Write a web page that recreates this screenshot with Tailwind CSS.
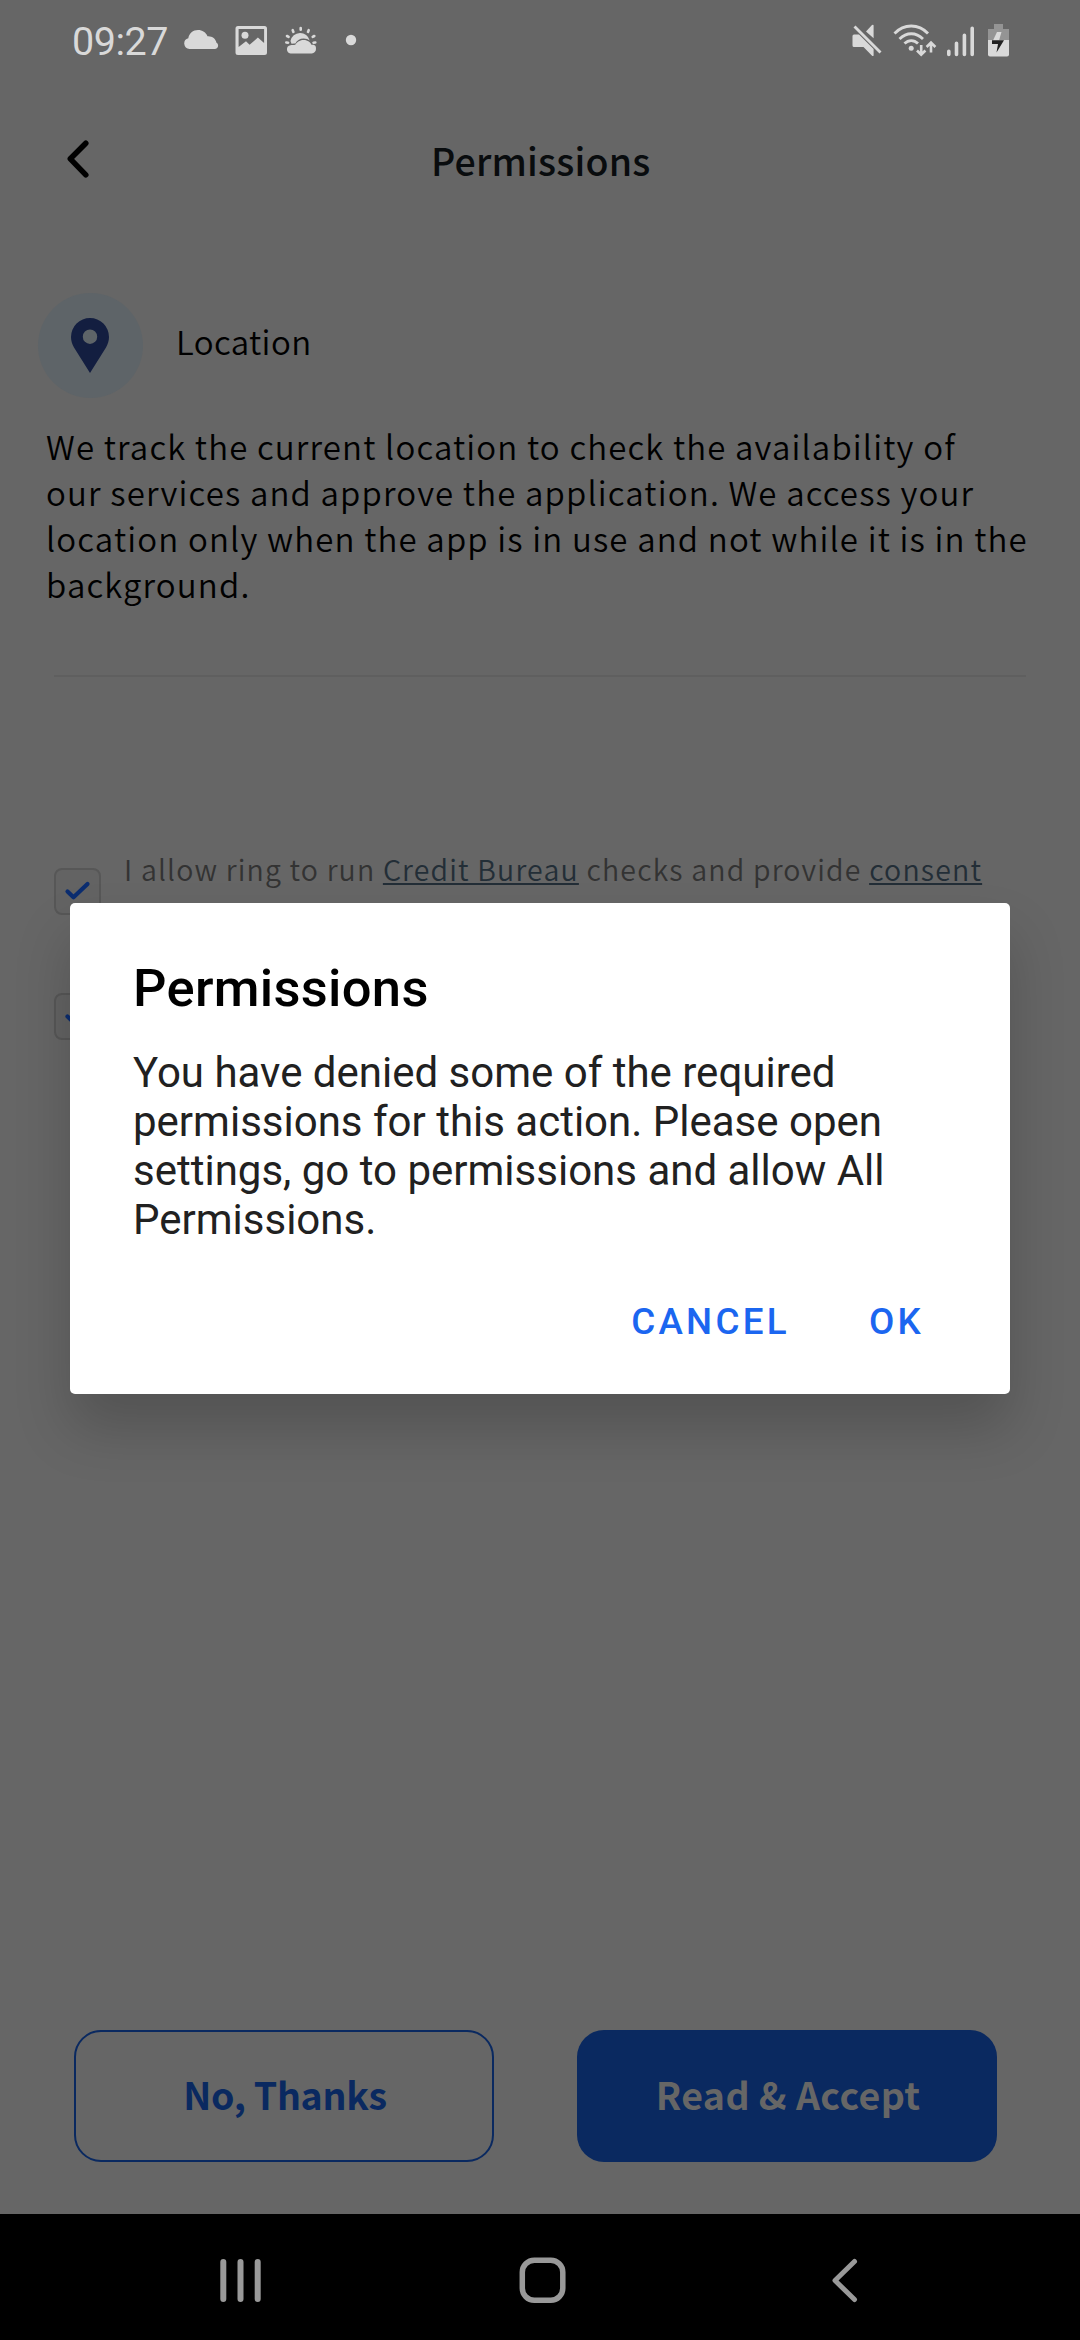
<!DOCTYPE html>
<html lang="en">
<head>
<meta charset="utf-8">
<title>Permissions</title>
<script src="https://cdn.jsdelivr.net/npm/@tailwindcss/browser@4"></script>
</head>
<body class="bg-[#666666]">
<div class="relative flex h-[2340px] w-[1080px] flex-col overflow-hidden bg-[#666666] font-['Noto_Sans_CJK_SC',sans-serif] text-black">

  <!-- status bar -->
  <div class="flex h-20 shrink-0 items-start justify-between pl-[72px] pr-[70px] text-[#d9d9d9]">
    <div class="flex">
      <span class="w-[112px] pt-[18px] font-[Roboto,sans-serif] text-[39.5px] leading-[48px] tracking-[-0.500px] whitespace-nowrap">09:27</span>
      <svg class="h-20 w-[176px]" viewBox="184 0 176 80" fill="currentColor">
        <path d="M189.500 49a5.500 5.500 0 0 1-1.200-10.800C189 33.500 193 30 198 30c4.300 0 8 2.500 9.500 6.200 4.500-.4 8.300 2.500 9 6.500 1 .5 1.600 1.500 1.600 2.800 0 2-1.500 3.500-3.400 3.500z"/>
        <path fill-rule="evenodd" d="M238 26h26.500a2.500 2.500 0 0 1 2.500 2.500v24a2.500 2.500 0 0 1-2.500 2.500H238a2.500 2.500 0 0 1-2.500-2.500v-24A2.500 2.500 0 0 1 238 26zm.6 3.100V47l7.400-5.800 3.600 3.600 8.300-7.300 6.200 5.500V29.100z"/>
        <circle cx="245" cy="35.300" r="3.500"/>
        <path d="M290.500 41a9.800 9.800 0 0 1 19.200-.5c-1.500-1.300-3.600-2.100-6-2.100-4 0-7 2-8.300 5.100a10 10 0 0 0-3.900.3z"/>
        <path d="M290.500 53.500a4.200 4.200 0 0 1 0-8.300c1.500-.4 4 .2 5-.7 1-2 4-4.600 8-4.600 4.500 0 7 2.600 8 4.800 4.500-.4 4.500 2 4.500 4.400 0 2.400-1.800 4.400-4.200 4.400z"/>
        <g stroke="currentColor" stroke-width="2.600" stroke-linecap="round"><path d="M300.700 28v1.800M292.700 30.200l.7 1.700M308.700 30.200l-.7 1.700M287 36l1.600.9M314.300 36l-1.600.9M286.300 42.500l1.800.2M315.300 42.500l-1.800.2"/></g>
        <circle cx="351" cy="40" r="5.200"/>
      </svg>
    </div>
    <svg class="h-20 w-[160px]" viewBox="850 0 160 80" fill="currentColor">
      <path d="M854 34.500h5l14.600 14.600v6.400q-.5 1-1.800 0l-8.300-8.500h-9.500a1.500 1.500 0 0 1-1.500-1.500v-9.500a1.500 1.500 0 0 1 1.500-1.500zM866 31.500l6-6.500q1.600-.8 1.600.6v12.600z"/>
      <path d="M854.500 26.500l26 26" stroke="currentColor" stroke-width="2.900"/>
      <g fill="none" stroke="currentColor" stroke-width="2.800"><path d="M894.500 33.500c9.500-10 24-10 33.500 0M899.500 39c7-7 16.500-7 23.500 0M904.500 43.600c4-4 9.500-4 13.500 0"/></g>
      <circle cx="911.200" cy="48.200" r="2.500"/>
      <g fill="none" stroke="currentColor" stroke-width="2.600"><path d="M921.200 45v9.500M917 50.500l4.200 4.200 4.200-4.200M931 52.500v-9.500M926.600 47l4.400-4.400 4.400 4.400"/></g>
      <g stroke="currentColor" stroke-width="3.600" stroke-linecap="round"><path d="M948.800 51.200v3.200M956.500 43.200v11.200M964.400 35.200v19.200M972.200 28.200v26.200"/></g>
      <path d="M994 24h9v5h6v11.500h-21V29h6z" fill="#949494"/>
      <path d="M988 40h21v14.500a2 2 0 0 1-2 2h-17a2 2 0 0 1-2-2z"/>
      <path d="M997 32h4.500l-2.500 8.500h-6z"/>
      <path d="M992 40.300h12l-7.500 12.200 1.500-8.500h-6z" fill="#222"/>
    </svg>
  </div>

  <!-- header -->
  <div class="flex h-[160px] shrink-0 pl-[64px]">
    <svg class="h-[160px] w-[28px]" viewBox="64 80 28 160" fill="none" stroke="#000" stroke-width="5.500" stroke-linecap="round" stroke-linejoin="round"><path d="M85.800 143.200 70.300 158.800 85.800 174.800"/></svg>
    <h1 class="ml-[339px] pt-[50px] text-[37.500px] leading-[60px] font-medium tracking-[0.200px] whitespace-nowrap text-[#090c0e]">Permissions</h1>
  </div>

  <!-- permission details -->
  <section class="flex flex-col pt-[53px]">
    <div class="flex items-center pl-[38px]">
      <div class="flex size-[105px] items-start justify-center rounded-full bg-[#5e6468]">
        <svg class="mt-[25px] -ml-px h-[55px] w-[38px]" viewBox="0 0 38 55" fill="#131e40"><path fill-rule="evenodd" d="M19 0a19 19 0 0 1 19 19c0 4-1.200 7-3 10.500L19 55 3 29.500C1.200 26 0 23 0 19A19 19 0 0 1 19 0zm0 11.500a7.200 7.200 0 1 0 0 14.400 7.200 7.200 0 0 0 0-14.400z"/></svg>
      </div>
      <span class="mb-[9px] ml-[33px] text-[33px] leading-[50px] font-[350] tracking-[0.400px]">Location</span>
    </div>
    <p class="mt-[25px] pl-[46px] text-[33px] leading-[46px] font-[350] tracking-[1.150px] whitespace-nowrap">We track the current location to check the availability of<br>our services and approve the application. We access your<br>location only when the app is in use and not while it is in the<br>background.</p>
    <div class="mt-[68px] ml-[54px] h-0.5 w-[972px] bg-[#5f5f5f]"></div>
  </section>

  <!-- consents -->
  <section class="flex flex-col gap-[78px] pt-[191px] pl-[54px]">
    <div class="flex h-[47px]">
      <div class="flex size-[47px] shrink-0 rounded-[8px] border-2 border-[#575757] bg-[#636363]">
        <svg class="size-[43px]" viewBox="0 0 43 43" fill="none" stroke="#0b2d70" stroke-width="4.200" stroke-linecap="round" stroke-linejoin="round"><path d="M11.500 21.500 17.500 27.300 31.500 14"/></svg>
      </div>
      <p class="-mt-[19px] ml-[23px] text-[28.500px] leading-[40px] font-[350] tracking-[1.170px] whitespace-nowrap text-[#333333]">I allow ring to run <span class="text-[#232e37] underline decoration-[1.500px] underline-offset-[2px]">Credit Bureau</span> checks and provide <span class="text-[#232e37] underline decoration-[1.500px] underline-offset-[2px]">consent</span></p>
    </div>
    <div class="flex size-[47px] shrink-0 rounded-[8px] border-2 border-[#575757] bg-[#636363]">
      <svg class="size-[43px]" viewBox="0 0 43 43" fill="none" stroke="#0b2d70" stroke-width="4.200" stroke-linecap="round" stroke-linejoin="round"><path d="M11.500 21.500 17.500 27.300 31.500 14"/></svg>
    </div>
  </section>

  <div class="grow"></div>

  <!-- actions -->
  <div class="mb-[52px] flex gap-[83px] pl-[74px] text-[37.500px] font-bold whitespace-nowrap">
    <button class="flex h-[132px] w-[420px] items-center justify-center rounded-[27px] border-[2.500px] border-[#0a2960] pb-[4px] pl-[2px] tracking-[-0.300px] text-[#0a2960]">No, Thanks</button>
    <button class="flex h-[132px] w-[420px] items-center justify-center rounded-[27px] bg-[#0a2960] pb-[4px] pl-[2px] tracking-[0.400px] text-[#666666]">Read &amp; Accept</button>
  </div>

  <!-- navigation bar -->
  <div class="h-[126px] shrink-0 bg-black">
    <svg class="h-[126px] w-[1080px]" viewBox="0 2214 1080 126" fill="none" stroke="#999" stroke-width="5.500" stroke-linecap="round" stroke-linejoin="round"><path d="M223.300 2262v37M240.500 2262v37M257.700 2262v37" stroke-width="6"/><rect x="522.300" y="2260.300" width="40.500" height="40" rx="12"/><path d="M854.500 2261.500 835 2280.500 854.500 2299.500" stroke-width="5"/></svg>
  </div>

  <!-- dialog -->
  <div class="absolute top-[903px] left-[70px] flex h-[491px] w-[940px] flex-col rounded-[5px] bg-white px-[63px] font-[Roboto,sans-serif] shadow-[0_34px_56px_rgba(0,0,0,0.19)]">
    <h2 class="mt-[55px] text-[52.500px] leading-[60px] font-medium tracking-[0.300px] whitespace-nowrap">Permissions</h2>
    <p class="mt-[30px] text-[42px] leading-[49px] whitespace-nowrap text-[#212121]">You have denied some of the required<br>permissions for this action. Please open<br>settings, go to permissions and allow All<br>Permissions.</p>
    <div class="mt-[56px] flex justify-end gap-[79px] pr-[23px] text-[36.750px] leading-[44px] font-medium tracking-[3.280px] text-[#1b66f0]"><span>CANCEL</span><span>OK</span></div>
  </div>
</div>
</body>
</html>
